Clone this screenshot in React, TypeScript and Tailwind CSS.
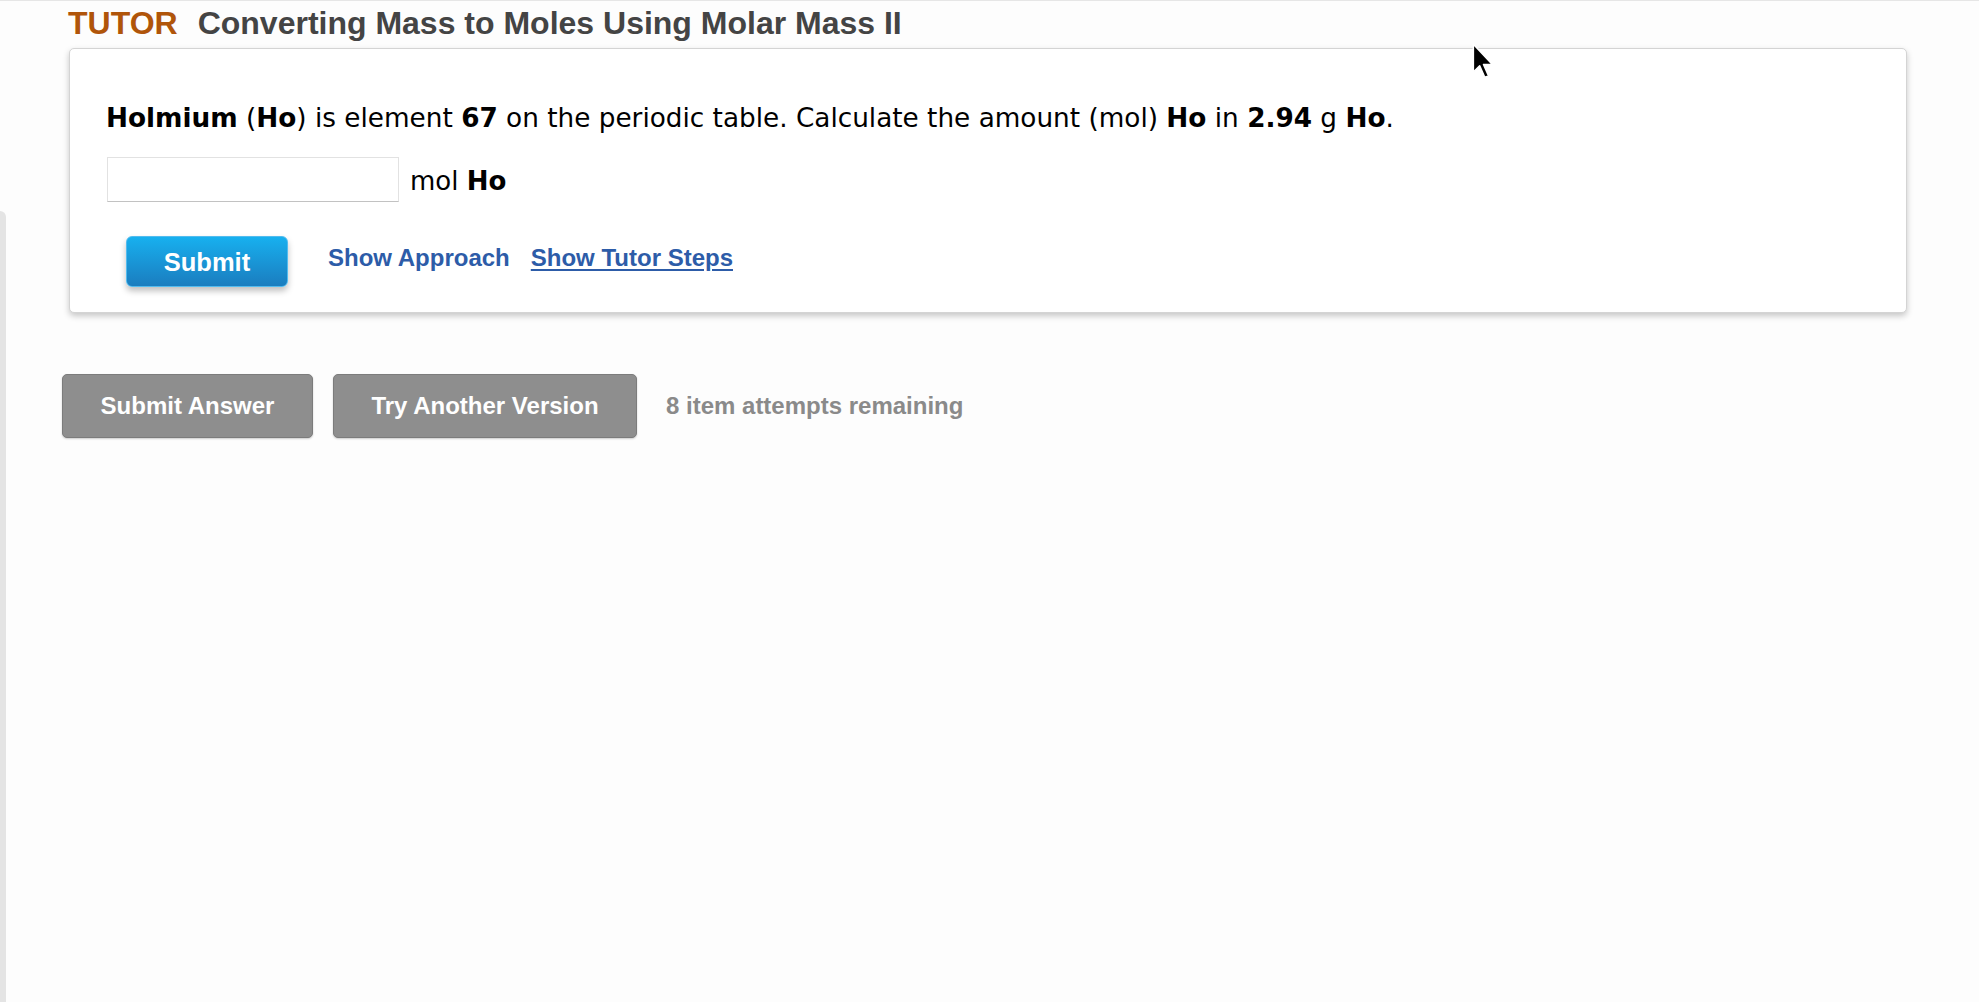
export default function App() {
  return (
    <div className="relative flex min-h-screen w-full border-t border-[#e6e6e6] bg-[#fdfdfd]">
      {/* left panel edge */}
      <div className="mt-[210px] w-[6px] shrink-0 rounded-tr-[6px] bg-[#e4e4e4]" />

      <main className="flex flex-col pl-[56px]">
        <h1 className="ml-[6px] pt-[4px] text-[32px] font-bold leading-[36px] text-[#444444] [font-family:'Liberation_Sans',Arial,sans-serif]">
          <span className="mr-[20px] text-[#b0550a]">TUTOR</span>
          Converting Mass to Moles Using Molar Mass II
        </h1>

        <section className="ml-[7px] mt-[7px] w-[1838px] rounded-[5px] border border-[#d4d4d4] bg-white pl-[36px] pr-[37px] pt-[54px] pb-[25px] shadow-[0_3px_6px_rgba(0,0,0,0.22)]">
          <p className="text-[26.3px] leading-[30px] text-black [font-family:'DejaVu_Sans',Verdana,sans-serif]">
            <b>Holmium</b> (<b>Ho</b>) is element <b>67</b> on the periodic table. Calculate the amount (mol) <b>Ho</b> in <b>2.94</b> g <b>Ho</b>.
          </p>

          <div className="mt-[24px] flex items-center gap-[11px] text-[26px] text-black [font-family:'DejaVu_Sans',Verdana,sans-serif]">
            <input
              type="text"
              className="ml-[1px] h-[45px] w-[292px] border border-[#e2e2e2] border-b-[#c2c2c2] bg-white px-2 outline-none"
            />
            <span className="pt-[3px]">
              mol <b>Ho</b>
            </span>
          </div>

          <div className="mt-[34px] flex items-center pl-[20px] [font-family:'Liberation_Sans',Arial,sans-serif]">
            <button className="h-[51px] w-[162px] rounded-[6px] border border-[#52bbee] bg-gradient-to-b from-[#17b0ef] to-[#1a7dbf] pt-[2px] text-[25.5px] font-bold text-white shadow-[0_4px_6px_rgba(0,0,0,0.25)]">
              Submit
            </button>
            <div className="ml-[40px] flex gap-[21px] pb-[7px] text-[24px] font-bold text-[#2d5ca8]">
              <a href="#">Show Approach</a>
              <a href="#" className="underline underline-offset-[3px]">
                Show Tutor Steps
              </a>
            </div>
          </div>
        </section>

        <div className="mt-[61px] flex items-center [font-family:'Liberation_Sans',Arial,sans-serif]">
          <button className="h-[64px] w-[251px] rounded-[5px] border border-[#7c7c7c] bg-[#8e8e8e] text-[24px] font-bold text-white shadow-[0_1px_2px_rgba(0,0,0,0.2)]">
            Submit Answer
          </button>
          <button className="ml-[20px] h-[64px] w-[304px] rounded-[5px] border border-[#7c7c7c] bg-[#8e8e8e] text-[24px] font-bold text-white shadow-[0_1px_2px_rgba(0,0,0,0.2)]">
            Try Another Version
          </button>
          <span className="ml-[29px] text-[24px] font-bold text-[#8a8a8a]">8 item attempts remaining</span>
        </div>
      </main>

      {/* mouse pointer */}
      <svg className="absolute left-[1472px] top-[42px]" width="23" height="38" viewBox="0 0 18 30">
        <path d="M1 1 L1 23 L6 18 L10 27 L13 26 L9 17 L16 17 Z" fill="#000" stroke="#fff" strokeWidth="1.2" strokeLinejoin="round" />
      </svg>
    </div>
  )
}
